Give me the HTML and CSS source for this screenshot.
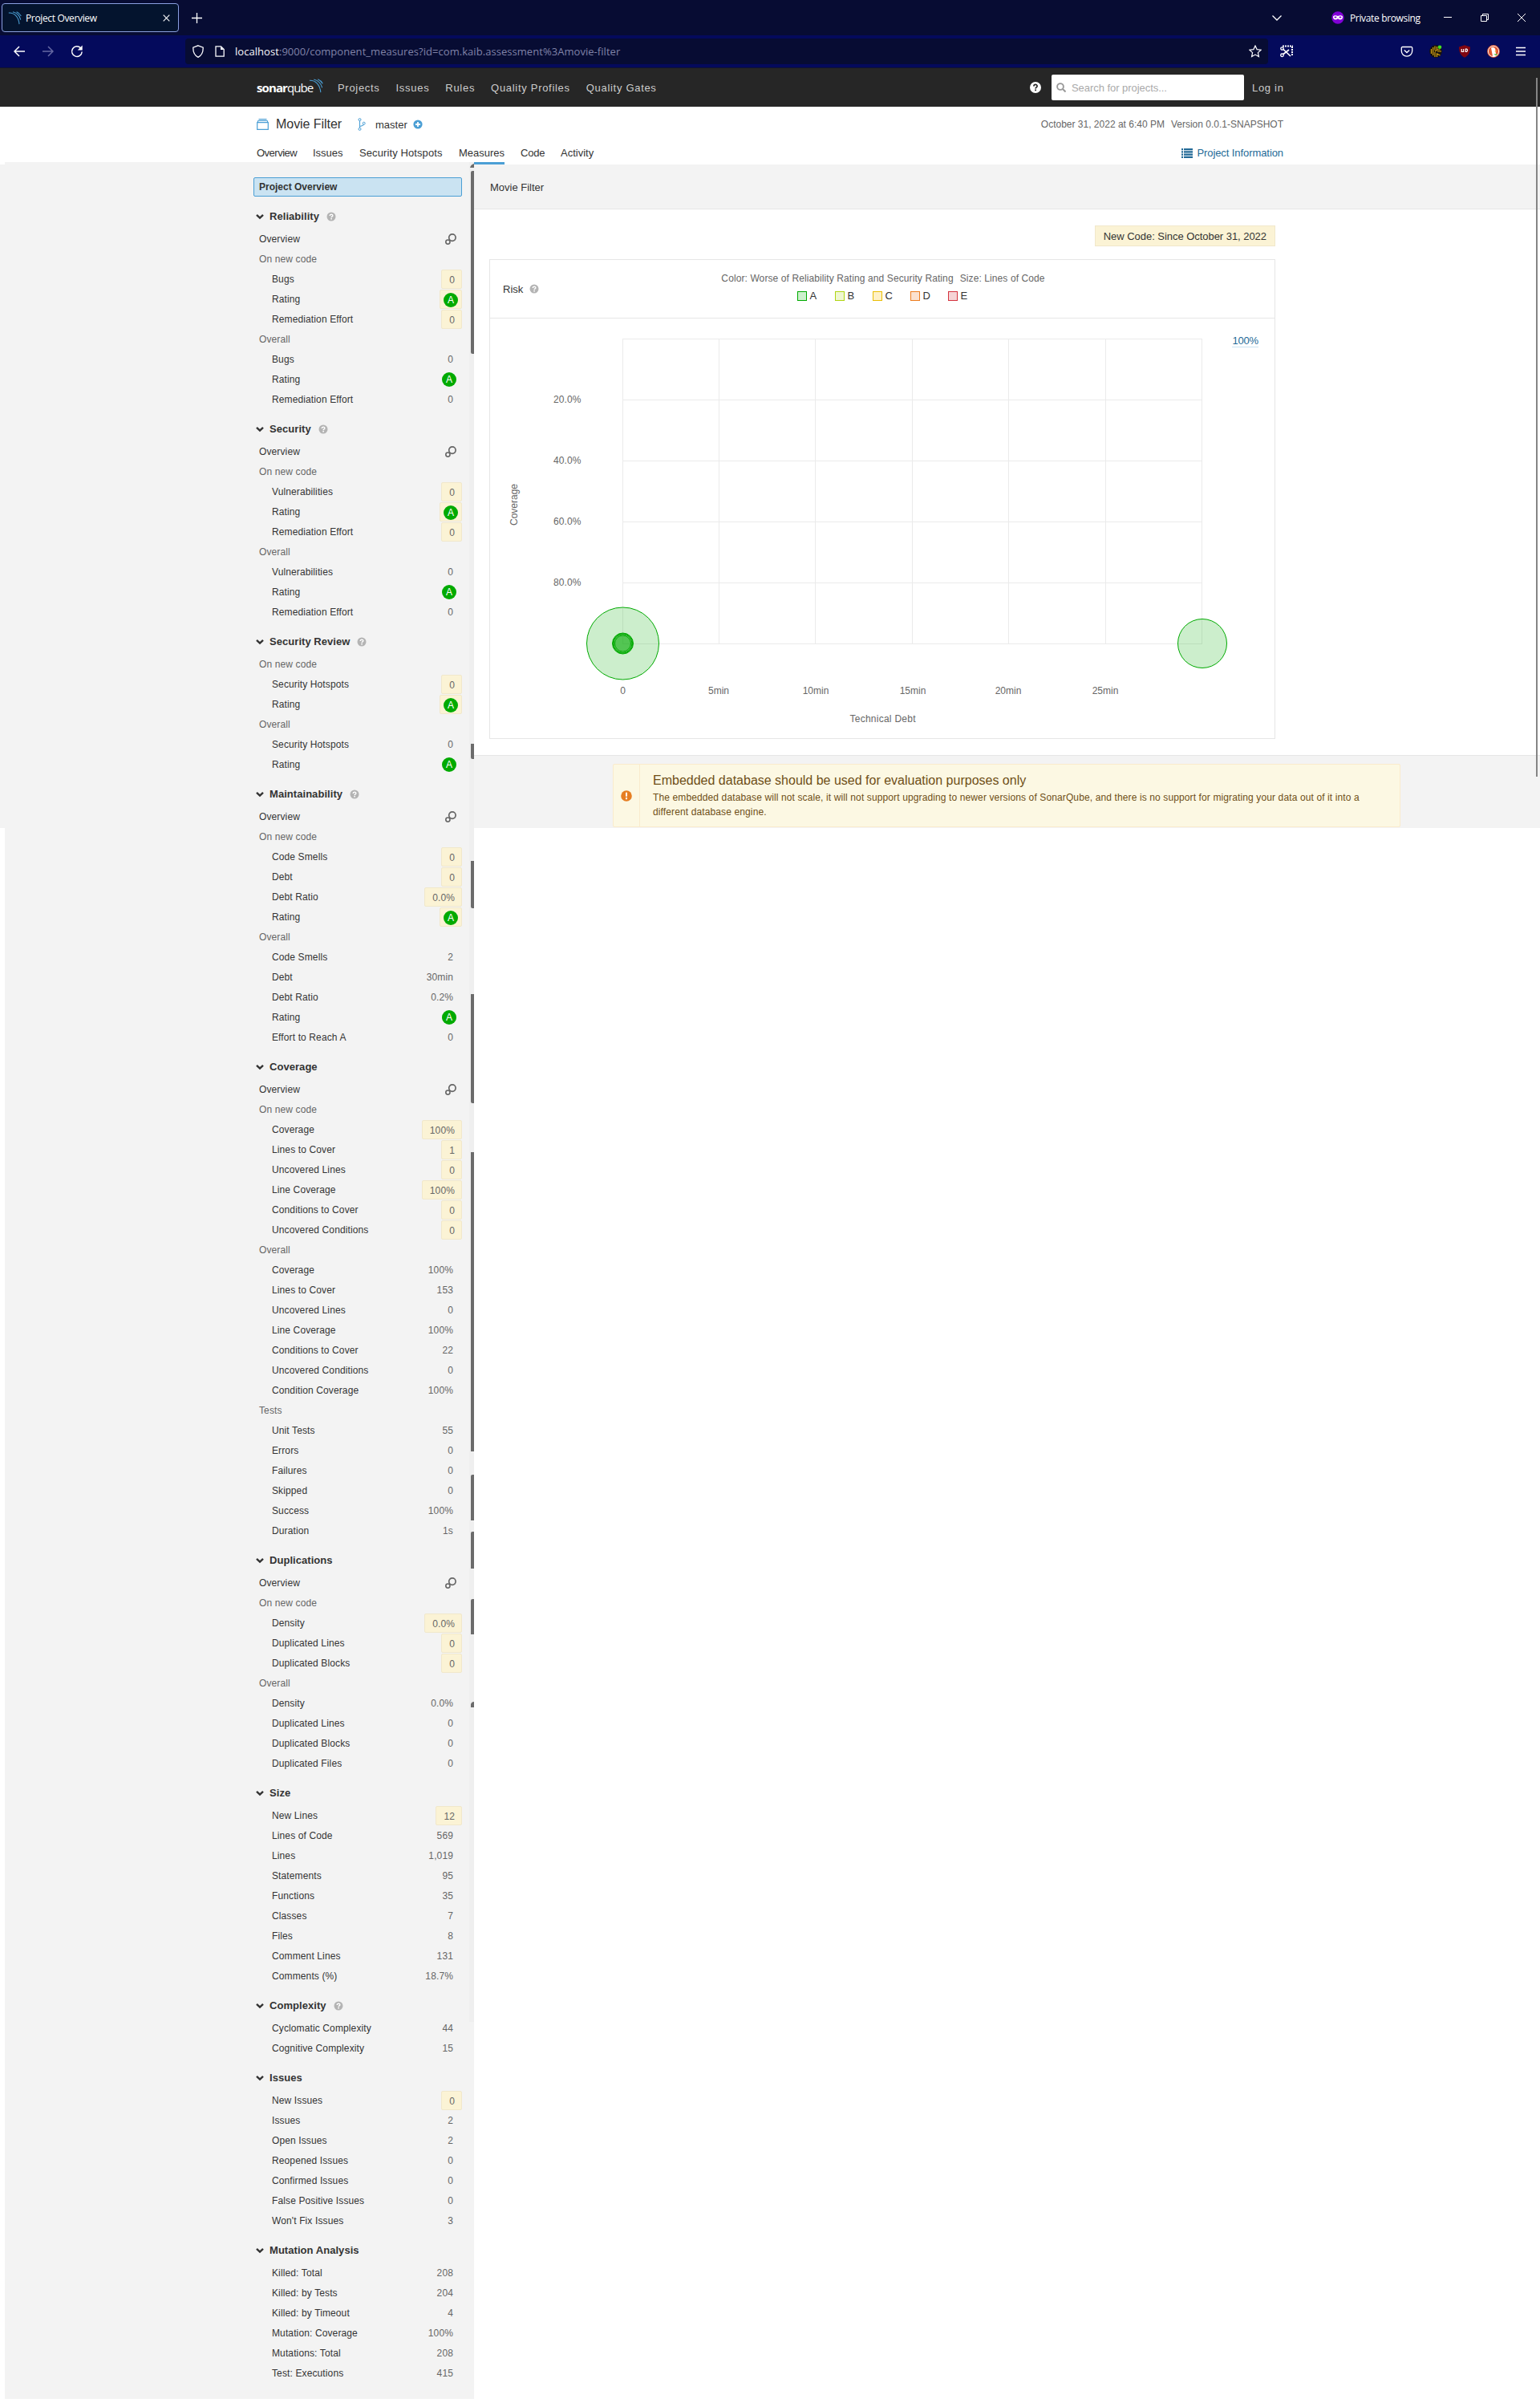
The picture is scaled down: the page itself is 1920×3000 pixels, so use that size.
FILE: index.html
```html
<!DOCTYPE html>
<html lang="en">
<head>
<meta charset="utf-8">
<title>Project Overview</title>
<link rel="stylesheet" href="styles.css">
</head>
<body>
<svg class="defs" width="0" height="0" aria-hidden="true">
  <symbol id="chevron" viewBox="0 0 10 8"><path d="M1 1.8 5 5.6 9 1.8" fill="none" stroke="#333" stroke-width="2.4"/></symbol>
  <symbol id="help" viewBox="0 0 12 12"><circle cx="6" cy="6" r="5.5" fill="#b4b4b4"/><path d="M4.2 4.9C4.2 2.6 7.8 2.6 7.8 4.7 7.8 6 6.1 5.900 6.100 7.200" fill="none" stroke="#fff" stroke-width="1.500"/><rect x="5.300" y="8" width="1.600" height="1.500" fill="#fff"/></symbol>
  <symbol id="bubbles" viewBox="0 0 14 14"><circle cx="8.900" cy="5.100" r="4.200" fill="none" stroke="#666" stroke-width="1.700"/><circle cx="3.400" cy="10.600" r="2.600" fill="none" stroke="#666" stroke-width="1.600"/></symbol>
  <symbol id="wave" viewBox="0 0 20 20"><path d="M1 2.500C9 2 15.500 8 16.500 19M7 1C13 2.500 17 6.500 18.500 12.500M12.500.8C15.500 2 17.700 4 19.200 7" fill="none" stroke="#4b9fd5" stroke-width="1.200"/></symbol>
</svg>

<div class="tabbar">
  <div class="tab"><svg width="17" height="19"><use href="#wave"/></svg><span class="tab-title">Project Overview</span>
    <svg class="tab-close" width="9" height="9" viewBox="0 0 9 9"><path d="M.7.7 8.300 8.300M8.300.7.7 8.300" stroke="#fff" stroke-width="1.100"/></svg></div>
  <svg class="tab-new" width="13" height="13" viewBox="0 0 13 13"><path d="M6.500 0v13M0 6.500h13" stroke="#fff" stroke-width="1.300"/></svg>
  <div class="window-tools">
    <svg class="tabs-list" width="12" height="7" viewBox="0 0 12 7"><path d="M.5.5 6 6 11.500.5" fill="none" stroke="#fff" stroke-width="1.300"/></svg>
    <svg width="16" height="16" viewBox="0 0 16 16"><circle cx="8" cy="8" r="7.700" fill="#8000d7"/><path d="M2 6.500C3.500 4.500 6.500 5 8 6 9.500 5 12.500 4.500 14 6.500 14.500 10 11 12 8 9.300 5 12 1.500 10 2 6.500Z" fill="#fff"/><ellipse cx="5" cy="7.600" rx="1.500" ry="1" fill="#8000d7"/><ellipse cx="11" cy="7.600" rx="1.500" ry="1" fill="#8000d7"/></svg>
    <span class="private">Private browsing</span>
    <svg class="win-min" width="10" height="10" viewBox="0 0 10 10"><path d="M0 4.500h10" stroke="#fff"/></svg>
    <svg class="win-max" width="10" height="10" viewBox="0 0 10 10"><path d="M.5 2.500h7v7h-7zM2.500 2.500v-2h7v7h-2" fill="none" stroke="#fff"/></svg>
    <svg class="win-close" width="10" height="10" viewBox="0 0 10 10"><path d="M0 0 10 10M10 0 0 10" stroke="#fff"/></svg>
  </div>
</div>

<div class="toolbar">
  <svg class="go-back" width="14" height="14" viewBox="0 0 14 14"><path d="M7 1 1 7l6 6M1 7h13" fill="none" stroke="#fff" stroke-width="1.500"/></svg>
  <svg class="go-forward" width="14" height="14" viewBox="0 0 14 14"><path d="M7 1l6 6-6 6M13 7H0" fill="none" stroke="#6669a3" stroke-width="1.500"/></svg>
  <svg class="reload" width="16" height="16" viewBox="0 0 16 16"><path d="M12.500 3.800A6.300 6.300 0 1 0 14.200 8.500" fill="none" stroke="#fff" stroke-width="1.500"/><path d="M14.700.5v6h-6z" fill="#fff"/></svg>
  <div class="urlbar">
    <svg width="16" height="16" viewBox="0 0 16 16"><path d="M8 .8 14.200 3.200C14.400 9 12.500 13 8 15.300 3.500 13 1.600 9 1.800 3.200Z" fill="none" stroke="#fbfbfe" stroke-width="1.300"/></svg>
    <svg class="page-icon" width="12" height="14" viewBox="0 0 12 14"><path d="M1 .8h6.500l3.700 3.700v8.700H1z" fill="none" stroke="#fbfbfe" stroke-width="1.300"/><path d="M7 1v4h4" fill="#fbfbfe"/></svg>
    <span class="url"><b>localhost</b>:9000/component_measures?id=com.kaib.assessment%3Amovie-filter</span>
    <svg class="star" width="16" height="16" viewBox="0 0 16 16"><path d="M8 1l2.100 4.600 5 .6-3.700 3.400 1 5L8 12.100 3.600 14.600l1-5L.9 6.200l5-.6z" fill="none" stroke="#fbfbfe" stroke-width="1.200"/></svg>
  </div>
  <svg class="shot" width="16" height="16" viewBox="0 0 16 16"><path d="M3 1.500h13M15 2v12" fill="none" stroke="#fff" stroke-width="2" stroke-dasharray="2 1"/><path d="M4 11.500 11 6M4 5.500l9 8.500" stroke="#fff" stroke-width="1.700"/><circle cx="2.500" cy="4.500" r="1.700" fill="none" stroke="#fff" stroke-width="1.300"/><circle cx="2.500" cy="12.800" r="1.800" fill="none" stroke="#fff" stroke-width="1.300"/></svg>
  <div class="addons">
    <svg width="16" height="16" viewBox="0 0 16 16"><path d="M2.500 2.500h11a1.200 1.200 0 0 1 1.200 1.200V7.500a6.700 6.700 0 0 1-13.400 0V3.700a1.200 1.200 0 0 1 1.200-1.200z" fill="none" stroke="#fff" stroke-width="1.300"/><path d="M4.800 6.500 8 9.500l3.200-3" fill="none" stroke="#fff" stroke-width="1.400"/></svg>
    <svg width="16" height="16" viewBox="0 0 16 16"><circle cx="8" cy="8" r="7.800" fill="#17130a"/><path d="M2.500 5v6M4.700 3v10M7 1.500v5M7 9v6M9.500 2v4h4M9.500 15v-4l4 2M10 8h5M7 8l3-2" fill="none" stroke="#dba514" stroke-width="1.200"/><circle cx="13" cy="2.800" r="2.300" fill="#45e01e"/></svg>
    <svg width="16" height="16" viewBox="0 0 16 16"><path d="M8 .3 15 2.500C15 9.500 13 13 8 15.700 3 13 1 9.500 1 2.500Z" fill="#800610"/><path d="M4.300 5v3.500h2.400V5M9.300 5v3.500h1.300q2-1.750 0-3.500z" fill="none" stroke="#fff" stroke-width="1.200"/></svg>
    <svg width="16" height="16" viewBox="0 0 16 16"><circle cx="8" cy="8" r="7.900" fill="#de5833"/><circle cx="8" cy="8" r="6.600" fill="none" stroke="#fff" stroke-width=".9"/><path d="M5 3.500c3-1.500 6 0 5.500 4.500l1 5.500q-3 1.500-4.500.5z" fill="#fff"/><path d="M9.500 7.500h3l-2.500 1.600z" fill="#fdbb2f"/><path d="M8 11.500l5-.5-1.500 2.500z" fill="#65bc46"/></svg>
    <svg width="12" height="16" viewBox="0 0 12 16"><path d="M0 3.500h12M0 8h12M0 12.500h12" stroke="#fff" stroke-width="1.300"/></svg>
  </div>
</div>

<header class="navbar">
  <div class="brand"><span class="brand-text"><b>sonar</b>qube</span><svg width="18" height="18"><use href="#wave"/></svg></div>
  <nav class="menu"><a>Projects</a><a>Issues</a><a>Rules</a><a>Quality Profiles</a><a>Quality Gates</a></nav>
  <div class="navbar-right">
    <svg width="14" height="14" viewBox="0 0 14 14"><circle cx="7" cy="7" r="7" fill="#fff"/><path d="M4.900 5.500C4.900 2.800 9.100 2.800 9.100 5.300 9.100 7 7.100 6.800 7.100 8.500" fill="none" stroke="#262626" stroke-width="1.700"/><rect x="6.200" y="9.500" width="1.800" height="1.700" fill="#262626"/></svg>
    <div class="search"><svg width="12" height="12" viewBox="0 0 12 12"><circle cx="5" cy="5" r="3.900" fill="none" stroke="#999" stroke-width="1.900"/><path d="M8 8l3.500 3.500" stroke="#999" stroke-width="2"/></svg><span>Search for projects...</span></div>
    <a class="login">Log in</a>
  </div>
</header>

<section class="project">
  <div class="project-top">
    <svg width="15" height="14" viewBox="0 0 15 14"><path d="M.7 4.700h13.600v8.600H.7zM1.500 2.500h12M2.500.6h10M1.500 2.500v2M13.500 2.500v2" fill="none" stroke="#4b9fd5" stroke-width="1.200"/></svg>
    <h1>Movie Filter</h1>
    <svg class="branch" width="10" height="16" viewBox="0 0 10 16"><path d="M2.500 3.500v9M2.500 10.500C5 10 7.200 9.500 7.500 8.200" fill="none" stroke="#4b9fd5" stroke-width="1.100"/><circle cx="2.500" cy="2.100" r="1.500" fill="none" stroke="#4b9fd5"/><circle cx="2.500" cy="13.900" r="1.500" fill="none" stroke="#4b9fd5"/><circle cx="7.700" cy="6.700" r="1.500" fill="none" stroke="#4b9fd5"/></svg>
    <span class="branch-name">master</span>
    <svg class="plus" width="12" height="12" viewBox="0 0 12 12"><circle cx="6" cy="6" r="5.600" fill="#4b9fd5"/><path d="M6 3v6M3 6h6" stroke="#fff" stroke-width="1.800"/></svg>
    <span class="meta"><span>October 31, 2022 at 6:40 PM</span><span>Version 0.0.1-SNAPSHOT</span></span>
  </div>
  <div class="project-tabs">
    <a class="t-overview">Overview</a><a class="t-issues">Issues</a><a class="t-hotspots">Security Hotspots</a><a class="t-measures selected">Measures</a><a class="t-code">Code</a><a>Activity</a>
    <a class="info"><svg width="14" height="12" viewBox="0 0 14 12"><path d="M0 1.200h2M3 1.200h11M0 4.400h2M3 4.400h11M0 7.600h2M3 7.600h11M0 10.800h2M3 10.800h11" stroke="#236a97" stroke-width="2.200"/></svg>Project Information</a>
  </div>
</section>

<div class="workspace">
  <div class="gutter"></div>
  <aside class="sidebar">
    <a class="overview-link">Project Overview</a>

    <h2><svg><use href="#chevron"/></svg>Reliability<svg class="q"><use href="#help"/></svg></h2>
    <ul>
      <li class="ov">Overview<svg><use href="#bubbles"/></svg></li>
      <li class="grp">On new code</li>
      <li>Bugs<i class="new">0</i></li><li>Rating<i class="new rate"><em>A</em></i></li><li>Remediation Effort<i class="new">0</i></li>
      <li class="grp">Overall</li>
      <li>Bugs<i>0</i></li><li>Rating<i class="rate"><em>A</em></i></li><li>Remediation Effort<i>0</i></li>
    </ul>

    <h2><svg><use href="#chevron"/></svg>Security<svg class="q"><use href="#help"/></svg></h2>
    <ul>
      <li class="ov">Overview<svg><use href="#bubbles"/></svg></li>
      <li class="grp">On new code</li>
      <li>Vulnerabilities<i class="new">0</i></li><li>Rating<i class="new rate"><em>A</em></i></li><li>Remediation Effort<i class="new">0</i></li>
      <li class="grp">Overall</li>
      <li>Vulnerabilities<i>0</i></li><li>Rating<i class="rate"><em>A</em></i></li><li>Remediation Effort<i>0</i></li>
    </ul>

    <h2><svg><use href="#chevron"/></svg>Security Review<svg class="q"><use href="#help"/></svg></h2>
    <ul>
      <li class="grp">On new code</li>
      <li>Security Hotspots<i class="new">0</i></li><li>Rating<i class="new rate"><em>A</em></i></li>
      <li class="grp">Overall</li>
      <li>Security Hotspots<i>0</i></li><li>Rating<i class="rate"><em>A</em></i></li>
    </ul>

    <h2><svg><use href="#chevron"/></svg>Maintainability<svg class="q"><use href="#help"/></svg></h2>
    <ul>
      <li class="ov">Overview<svg><use href="#bubbles"/></svg></li>
      <li class="grp">On new code</li>
      <li>Code Smells<i class="new">0</i></li><li>Debt<i class="new">0</i></li><li>Debt Ratio<i class="new">0.0%</i></li><li>Rating<i class="new rate"><em>A</em></i></li>
      <li class="grp">Overall</li>
      <li>Code Smells<i>2</i></li><li>Debt<i>30min</i></li><li>Debt Ratio<i>0.2%</i></li><li>Rating<i class="rate"><em>A</em></i></li><li>Effort to Reach A<i>0</i></li>
    </ul>

    <h2><svg><use href="#chevron"/></svg>Coverage</h2>
    <ul>
      <li class="ov">Overview<svg><use href="#bubbles"/></svg></li>
      <li class="grp">On new code</li>
      <li>Coverage<i class="new">100%</i></li><li>Lines to Cover<i class="new">1</i></li><li>Uncovered Lines<i class="new">0</i></li><li>Line Coverage<i class="new">100%</i></li><li>Conditions to Cover<i class="new">0</i></li><li>Uncovered Conditions<i class="new">0</i></li>
      <li class="grp">Overall</li>
      <li>Coverage<i>100%</i></li><li>Lines to Cover<i>153</i></li><li>Uncovered Lines<i>0</i></li><li>Line Coverage<i>100%</i></li><li>Conditions to Cover<i>22</i></li><li>Uncovered Conditions<i>0</i></li><li>Condition Coverage<i>100%</i></li>
      <li class="grp">Tests</li>
      <li>Unit Tests<i>55</i></li><li>Errors<i>0</i></li><li>Failures<i>0</i></li><li>Skipped<i>0</i></li><li>Success<i>100%</i></li><li>Duration<i>1s</i></li>
    </ul>

    <h2><svg><use href="#chevron"/></svg>Duplications</h2>
    <ul>
      <li class="ov">Overview<svg><use href="#bubbles"/></svg></li>
      <li class="grp">On new code</li>
      <li>Density<i class="new">0.0%</i></li><li>Duplicated Lines<i class="new">0</i></li><li>Duplicated Blocks<i class="new">0</i></li>
      <li class="grp">Overall</li>
      <li>Density<i>0.0%</i></li><li>Duplicated Lines<i>0</i></li><li>Duplicated Blocks<i>0</i></li><li>Duplicated Files<i>0</i></li>
    </ul>

    <h2><svg><use href="#chevron"/></svg>Size</h2>
    <ul>
      <li>New Lines<i class="new">12</i></li><li>Lines of Code<i>569</i></li><li>Lines<i>1,019</i></li><li>Statements<i>95</i></li><li>Functions<i>35</i></li><li>Classes<i>7</i></li><li>Files<i>8</i></li><li>Comment Lines<i>131</i></li><li>Comments (%)<i>18.7%</i></li>
    </ul>

    <h2><svg><use href="#chevron"/></svg>Complexity<svg class="q"><use href="#help"/></svg></h2>
    <ul>
      <li>Cyclomatic Complexity<i>44</i></li><li>Cognitive Complexity<i>15</i></li>
    </ul>

    <h2><svg><use href="#chevron"/></svg>Issues</h2>
    <ul>
      <li>New Issues<i class="new">0</i></li><li>Issues<i>2</i></li><li>Open Issues<i>2</i></li><li>Reopened Issues<i>0</i></li><li>Confirmed Issues<i>0</i></li><li>False Positive Issues<i>0</i></li><li>Won't Fix Issues<i>3</i></li>
    </ul>

    <h2><svg><use href="#chevron"/></svg>Mutation Analysis</h2>
    <ul>
      <li>Killed: Total<i>208</i></li><li>Killed: by Tests<i>204</i></li><li>Killed: by Timeout<i>4</i></li><li>Mutation: Coverage<i>100%</i></li><li>Mutations: Total<i>208</i></li><li>Test: Executions<i>415</i></li>
    </ul>

    <svg class="side-scroll" width="6" height="2318" viewBox="0 202 6 2318">
      <path fill="#efefef" d="M0 202h6v2318H0z"/>
      <path fill="#6b6b6b" d="M1 209q1-4 5-5v5zM2 215q0-2 2-2h2v228H4q-2 0-2-2zM2 927h4v19H4q-2 0-2-2zM2 1073h4v59H4q-2 0-2-2zM2 1239h4v136H4q-2 0-2-2zM2 1436h4v373H2zM2 1840q0-2 2-2h2v57H2zM2 1911q0-2 2-2h2v46H2zM2 1995q0-2 2-2h2v44H2zM2 2128v-4q1-3 4-3v7z"/>
    </svg>
  </aside>

  <main>
    <div class="crumb">Movie Filter</div>
    <div class="content">
      <div class="leak"><span>New Code: Since October 31, 2022</span></div>
      <div class="card">
        <div class="card-head">
          <div class="card-title">Risk<svg><use href="#help"/></svg></div>
          <div class="legend">
            <p><span>Color: Worse of Reliability Rating and Security Rating</span><span>Size: Lines of Code</span></p>
            <div class="keys"><span class="ka">A</span><span class="kb">B</span><span class="kc">C</span><span class="kd">D</span><span class="ke">E</span></div>
          </div>
        </div>
        <svg class="chart" width="978" height="523" viewBox="611 397 978 523">
          <path fill="none" stroke="#ebebeb" d="M776 422.500h723M776 498.500h723M776 574.500h723M776 650.500h723M776 726.500h723M776 802.500h723M776.500 422v380M896.500 422v380M1016.500 422v380M1137.500 422v380M1257.500 422v380M1378.500 422v380M1498.500 422v380"/>
          <g text-anchor="end"><text x="724.500" y="502" textLength="34.500">20.0%</text><text x="724.500" y="578" textLength="34.500">40.0%</text><text x="724.500" y="654" textLength="34.500">60.0%</text><text x="724.500" y="730" textLength="34.500">80.0%</text></g>
          <g text-anchor="middle"><text x="776.500" y="865">0</text><text x="896" y="865">5min</text><text x="1017" y="865">10min</text><text x="1138" y="865">15min</text><text x="1257" y="865">20min</text><text x="1378" y="865">25min</text><text x="1100.500" y="900" textLength="82">Technical Debt</text><text transform="translate(645 629) rotate(-90)">Coverage</text></g>
          <g fill="#0a0" fill-opacity=".2" stroke="#0a0"><circle cx="776.500" cy="802" r="45"/><circle cx="776.500" cy="802" r="13"/><circle cx="776.500" cy="802" r="12.300"/><circle cx="776.500" cy="802" r="11.500"/><circle cx="776.500" cy="802" r="10"/><circle cx="1499" cy="802" r="30.500"/></g>
          <text class="zoomed" x="1536.500" y="429" textLength="32.500">100%</text><path stroke="#cae3f2" d="M1536 432.500h33"/>
        </svg>
      </div>
    </div>
    <footer>
      <div class="alert">
        <div class="alert-icon"><svg width="14" height="14" viewBox="0 0 14 14"><circle cx="7" cy="7" r="6.800" fill="#e67e22"/><path d="M7 2.800v5M7 9v2.200" stroke="#fff" stroke-width="2"/></svg></div>
        <div class="alert-body"><strong>Embedded database should be used for evaluation purposes only</strong>
          <p>The embedded database will not scale, it will not support upgrading to newer versions of SonarQube, and there is no support for migrating your data out of it into a<br>different database engine.</p></div>
      </div>
    </footer>
  </main>
</div>
<div class="page-scroll"></div>
</body>
</html>
```
FILE: styles.css
```css
* { box-sizing: border-box; }
body { margin: 0; width: 1920px; height: 3000px; position: relative; overflow: hidden; background: #fff; color: #333; font-family: "Liberation Sans", Arial, sans-serif; font-size: 12px; }
svg { display: block; flex: none; }
.defs { position: absolute; }

/* browser window */
.tabbar { display: flex; align-items: center; height: 44px; background: #070c33; color: #fff; font: 12px "Open Sans", "Noto Sans", sans-serif; padding-left: 2px; }
.tab { display: flex; align-items: center; width: 221px; height: 36px; border: 1px solid #8a9fe0; border-radius: 4px; background: #04142e; padding: 0 10px 0 7px; }
.tab-title { margin-left: 5px; letter-spacing: -.35px; }
.tab-close { margin-left: auto; }
.tab-new { margin-left: 16px; }
.window-tools { display: flex; align-items: center; margin-left: auto; padding-right: 18px; }
.tabs-list { margin-right: 62px; }
.private { width: 89px; margin: 0 28px 0 7px; letter-spacing: -.35px; white-space: nowrap; }
.win-min { margin-right: 36px; }
.win-max { margin-right: 36px; }
.toolbar { display: flex; align-items: center; height: 41px; background: #040a5c; padding: 0 18px 0 17px; border-bottom: 1px solid #10132e; }
.go-forward { margin-left: 22px; }
.reload { margin-left: 21px; }
.urlbar { display: flex; align-items: center; width: 1350px; height: 32px; margin-left: 127px; padding: 0 8px; border-radius: 4px; background: #070c33; }
.page-icon { margin-left: 13px; }
.url { margin-left: 13px; color: #8083a8; font: 13px "Open Sans", "Noto Sans", sans-serif; letter-spacing: .05px; }
.url b { color: #fbfbfe; font-weight: 400; }
.star { margin-left: auto; }
.shot { margin-left: 15px; }
.addons { display: flex; align-items: center; gap: 20px; margin-left: auto; }

/* application header */
.navbar { display: flex; align-items: center; height: 48px; background: #262626; padding: 0 320px 0 320px; color: #ccc; font-size: 13px; letter-spacing: .7px; }
.brand { display: flex; align-items: flex-start; width: 91px; height: 22px; color: #fff; }
.brand-text { width: 65px; padding-top: 2px; font: 15px/18px "Open Sans", sans-serif; letter-spacing: -.9px; }
.menu { display: flex; }
.menu a { padding: 0 10px; }
.navbar-right { display: flex; align-items: center; margin-left: auto; }
.search { display: flex; align-items: center; gap: 7px; width: 240px; height: 32px; margin: 0 10px 0 13px; padding: 0 6px; border-radius: 2px; background: #fff; color: #aaa; letter-spacing: -.05px; }
.login { width: 39px; white-space: nowrap; }
.project { height: 72px; padding: 0 320px; background: #fff; }
.project-top { display: flex; align-items: center; height: 44px; }
.project-top h1 { width: 83px; margin: 0 0 0 9px; font-size: 16px; font-weight: 400; letter-spacing: -.05px; white-space: nowrap; }
.branch { margin-left: 19px; }
.branch-name { margin-left: 12px; width: 40px; font-size: 13px; }
.plus { margin-left: 7px; }
.meta { display: flex; gap: 8px; margin-left: auto; color: #666; }
.project-tabs { display: flex; height: 28px; gap: 20px; font-size: 13px; line-height: 28px; white-space: nowrap; }
.t-overview { width: 50px; letter-spacing: -.5px; }
.t-issues { width: 38px; }
.t-hotspots { width: 104px; letter-spacing: .1px; }
.t-measures { width: 57px; }
.t-code { width: 30px; letter-spacing: -.2px; }
.project-tabs .selected { border-bottom: 3px solid #4b9fd5; }
.project-tabs .info { display: flex; align-items: center; gap: 5px; margin-left: auto; color: #236a97; letter-spacing: -.08px; }

/* measures */
.workspace { display: flex; align-items: flex-start; margin-top: -3px; }
.gutter { width: 6px; height: 827px; margin-top: 3px; background: #f3f3f3; }
.sidebar { position: relative; width: 585px; height: 2788px; padding: 19px 15px 0 310px; background: #f3f3f3; }
.overview-link { display: block; height: 24px; padding-left: 6px; margin-bottom: 1px; border: 1px solid #4b9fd5; border-radius: 2px; background: #cae3f2; font-weight: 700; line-height: 23px; }
.sidebar h2 { display: flex; align-items: center; height: 40px; margin: 0; padding: 12px 0 4px 3px; font-size: 13px; line-height: 24px; letter-spacing: .05px; }
.sidebar h2 svg { width: 10px; height: 8px; margin-right: 7px; }
.sidebar h2 .q { width: 12px; height: 12px; margin: 0 0 0 9px; }
.sidebar ul { margin: 0; padding: 0; list-style: none; }
.sidebar li { display: flex; height: 25px; padding: 0 0 1px 23px; line-height: 24px; letter-spacing: .12px; }
.sidebar li.ov, .sidebar li.grp { padding-left: 7px; }
.sidebar li.grp { color: #666; }
.sidebar li.ov svg { width: 14px; height: 14px; margin: 5px 7px 0 auto; }
.sidebar i { height: 24px; margin-left: auto; padding: 0 11px 0 0; color: #666; font-style: normal; }
.sidebar i.new { padding: 0 8px 0 9px; border: 1px solid #f1e8cb; border-radius: 2px; background: #fbf3d5; }
.sidebar i.rate { padding: 3px 7px 0 0; }
.sidebar i.new.rate { padding: 3px 4px 0; }
.sidebar em { display: block; width: 18px; height: 18px; border-radius: 50%; background: #0a0; color: #fff; font-style: normal; line-height: 18px; text-align: center; }
.side-scroll { position: absolute; right: 0; top: 0; }
main { flex: 1; height: 827px; margin-top: 3px; display: flex; flex-direction: column; }
.crumb { height: 56px; padding: 1px 0 0 20px; border-bottom: 1px solid #e6e6e6; background: #f3f3f3; font-size: 13px; line-height: 56px; }
.content { height: 680px; padding: 20px 0 0 19px; width: 999px; }
.leak { display: flex; justify-content: flex-end; height: 42px; }
.leak span { height: 26px; padding: 0 10px; border: 1px solid #f1e8cb; background: #fbf3d5; font-size: 13px; line-height: 25px; letter-spacing: -.04px; }
.card { width: 980px; height: 598px; border: 1px solid #e6e6e6; }
.card-head { display: flex; height: 73px; border-bottom: 1px solid #e6e6e6; }
.card-title { display: flex; align-items: center; width: 150px; padding-left: 16px; font-size: 13px; }
.card-title svg { width: 12px; height: 12px; margin-left: 8px; }
.legend { width: 680px; padding-top: 14px; text-align: center; }
.legend p { display: flex; justify-content: center; gap: 8px; margin: 0; color: #666; line-height: 18px; letter-spacing: .1px; }
.keys { display: flex; justify-content: center; margin-top: 4px; font-size: 13px; line-height: 18px; }
.keys span { display: flex; align-items: center; width: 47px; gap: 4px; padding-left: 10px; }
.keys span::before { content: ""; width: 10px; height: 10px; border: 1px solid #0a0; background: #ccf0cc; }
.keys .kb::before { border-color: #b0d513; background: #eff7d0; }
.keys .kc::before { border-color: #eabe06; background: #fff1c6; }
.keys .kd::before { border-color: #ed7d20; background: #fbe1cf; }
.keys .ke::before { border-color: #d4333f; background: #f6d3d6; }
.chart text { fill: #666; font-size: 12px; }
.chart .zoomed { fill: #236a97; font-size: 13px; }
footer { flex: 1; border-top: 1px solid #e6e6e6; background: #f3f3f3; padding: 10px 0 0 173px; }
.alert { display: flex; width: 982px; height: 79px; border: 1px solid #faebcc; border-radius: 2px; background: #fcf8e3; color: #6f4f17; }
.alert-icon { display: flex; align-items: center; justify-content: center; width: 33px; border-right: 1px solid #faebcc; }
.alert-body { padding: 9px 0 0 16px; white-space: nowrap; }
.alert-body strong { display: block; font-size: 16px; font-weight: 400; line-height: 22px; }
.alert-body p { margin: 1px 0 0; line-height: 18px; letter-spacing: .12px; }
.page-scroll { position: absolute; left: 1915px; top: 97px; width: 2px; height: 871px; background: #858585; }
```
